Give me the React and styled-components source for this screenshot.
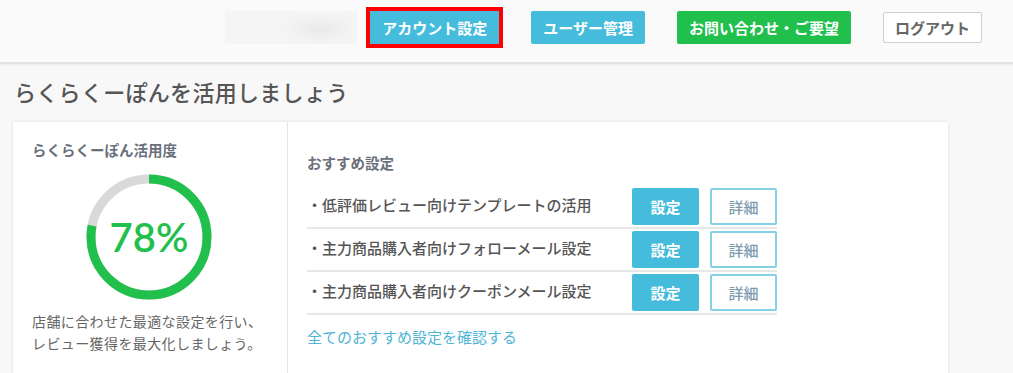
import React from 'react'
import styled, { createGlobalStyle } from 'styled-components'

const GlobalStyle = createGlobalStyle`
	html, body {
		margin: 0;
		padding: 0;
		background: #f8f8f8;
		font-family: "Noto Sans CJK JP", "Noto Sans", sans-serif;
		color: #555;
	}
`

const recommendations = [
	'・低評価レビュー向けテンプレートの活用',
	'・主力商品購入者向けフォローメール設定',
	'・主力商品購入者向けクーポンメール設定',
]

export default function App() {
	return (
		<>
			<GlobalStyle />
			<Header>
				<BlurName aria-hidden='true' />
				<NavButton $bg='#45bcdc' $highlight>アカウント設定</NavButton>
				<NavButton $bg='#45bcdc'>ユーザー管理</NavButton>
				<NavButton $bg='#21c04c'>お問い合わせ・ご要望</NavButton>
				<LogoutButton>ログアウト</LogoutButton>
			</Header>
			<Main>
				<PageTitle>らくらくーぽんを活用しましょう</PageTitle>
				<Card>
					<LeftCol>
						<SectionTitle>らくらくーぽん活用度</SectionTitle>
						<Gauge percent={78} />
						<Description>
							店舗に合わせた最適な設定を行い、<br />
							レビュー獲得を最大化しましょう。
						</Description>
					</LeftCol>
					<RightCol>
						<SectionTitle>おすすめ設定</SectionTitle>
						<List>
							{recommendations.map((text) => (
								<Row key={text}>
									<RowText>{text}</RowText>
									<SmallButton $filled>設定</SmallButton>
									<SmallButton>詳細</SmallButton>
								</Row>
							))}
						</List>
						<MoreLink href='#'>全てのおすすめ設定を確認する</MoreLink>
					</RightCol>
				</Card>
			</Main>
		</>
	)
}

function Gauge({ percent }) {
	const r = 58
	const c = 2 * Math.PI * r
	return (
		<GaugeWrap>
			<svg width='126' height='126' viewBox='0 0 126 126'>
				<circle cx='63' cy='63' r={r} fill='none' stroke='#d9d9d9' strokeWidth='9' />
				<circle
					cx='63'
					cy='63'
					r={r}
					fill='none'
					stroke='#21c04c'
					strokeWidth='9'
					strokeDasharray={`${(c * percent) / 100} ${c}`}
					transform='rotate(-90 63 63)'
				/>
			</svg>
			<GaugeValue>{percent}%</GaugeValue>
		</GaugeWrap>
	)
}

const Header = styled.header`
	height: 64px;
	background: #fafafa;
	border-bottom: 2px solid #e3e3e3;
	box-shadow: 0 1px 2px rgba(0, 0, 0, 0.06);
	display: flex;
	align-items: center;
	justify-content: flex-end;
	gap: 32px;
	padding-right: 31px;
	padding-bottom: 8px;
	box-sizing: border-box;
`

const BlurName = styled.div`
	width: 132px;
	height: 33px;
	margin-right: -19px;
	background: radial-gradient(ellipse 45px 18px at 72% 55%, #e9e9e9, #f3f3f3 70%, #f5f5f5);
`

const NavButton = styled.button`
	height: 33px;
	padding: 0 12px;
	border: none;
	border-radius: ${(p) => (p.$highlight ? '0' : '2px')};
	background: ${(p) => p.$bg};
	color: #fff;
	font-family: inherit;
	font-size: 15px;
	font-weight: 700;
	outline: ${(p) => (p.$highlight ? '4px solid #f00' : 'none')};
`

const LogoutButton = styled.button`
	height: 31px;
	width: 99px;
	border: 1px solid #cfcfcf;
	border-radius: 2px;
	background: #fff;
	color: #666;
	font-family: inherit;
	font-size: 15px;
	font-weight: 700;
`

const Main = styled.main`
	padding: 0 65px 0 13px;
`

const PageTitle = styled.h1`
	margin: 12px 0 16px 1px;
	font-size: 22px;
	line-height: 30px;
	font-weight: 500;
	color: #555;
	letter-spacing: 0.3px;
`

const Card = styled.section`
	background: #fff;
	box-shadow: 0 0 3px rgba(0, 0, 0, 0.13);
	display: flex;
	min-height: 300px;
`

const LeftCol = styled.div`
	width: 275px;
	border-right: 1px solid #e6e6e6;
	padding: 18px 0 0 19px;
	box-sizing: border-box;
`

const RightCol = styled.div`
	padding: 31px 0 0 19px;
	width: 490px;
`

const SectionTitle = styled.h2`
	margin: 0;
	font-size: 14.5px;
	line-height: 20px;
	font-weight: 700;
	color: #6a707c;
`

const GaugeWrap = styled.div`
	position: relative;
	width: 126px;
	height: 126px;
	margin: 14px 0 0 54px;
`

const GaugeValue = styled.div`
	position: absolute;
	inset: 0;
	display: flex;
	align-items: center;
	justify-content: center;
	font-family: Lato, "Noto Sans", sans-serif;
	font-size: 40px;
	font-weight: 600;
	color: #21c04c;
`

const Description = styled.p`
	margin: 10px 0 0;
	font-size: 14px;
	line-height: 22px;
	color: #666;
	letter-spacing: 0.4px;
`

const List = styled.div`
	margin-top: 13px;
	width: 470px;
`

const Row = styled.div`
	display: flex;
	align-items: center;
	gap: 11px;
	height: 41px;
	border-bottom: 2px solid #e7e7e7;
`

const RowText = styled.span`
	flex: 1;
	font-size: 15px;
	font-weight: 500;
	color: #555;
	padding-bottom: 4px;
`

const SmallButton = styled.button`
	width: 67px;
	height: 37px;
	border-radius: 2px;
	border: ${(p) => (p.$filled ? 'none' : '2px solid #86d0e6')};
	background: ${(p) => (p.$filled ? '#45bcdc' : '#fff')};
	color: ${(p) => (p.$filled ? '#fff' : '#7c9bb0')};
	font-family: inherit;
	font-size: 15px;
	font-weight: ${(p) => (p.$filled ? 700 : 500)};
`

const MoreLink = styled.a`
	display: inline-block;
	margin-top: 11px;
	font-size: 15px;
	color: #4fb5d6;
	text-decoration: none;
`
